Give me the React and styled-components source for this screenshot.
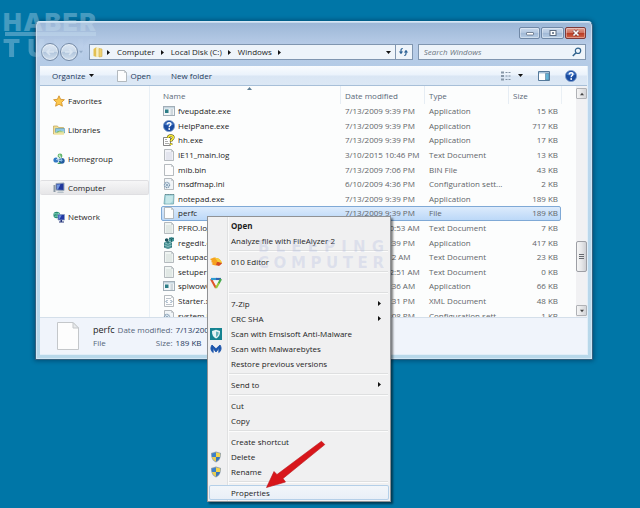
import React from "react";
import styled, { createGlobalStyle, css } from "styled-components";

const Global = createGlobalStyle`
  * { box-sizing: border-box; }
  body {
    margin: 0;
    background: #0076a7;
    font: 8px/12px "Open Sans", "Noto Sans", sans-serif;
    color: #1c1c1c;
  }
  button, input { font: inherit; color: inherit; border: 0; padding: 0; margin: 0; background: none; }
  ul, dl, dd { margin: 0; padding: 0; list-style: none; }
  svg { display: block; flex: none; }
`;

const Desktop = styled.main`
  position: relative;
  min-height: 100vh;
  padding: 21px 47px 0 35px;
  overflow: hidden;
`;

const Window = styled.section`
  display: flex;
  flex-direction: column;
  padding: 0 4px 4px;
  border: 1px solid #35607e;
  border-top-color: #d5e6f5;
  border-radius: 5px 5px 1px 1px;
  background: linear-gradient(#9bb6d6 0, #b9cde8 24px, #b4cbe6 44px, #bdd7ee 70px, #b8d8ea 100%);
  box-shadow: 0 0 4px 1px rgba(0, 30, 60, 0.45), inset 0 0 0 1px rgba(225, 240, 250, 0.6);
`;

const TitleBar = styled.header`
  display: flex;
  justify-content: flex-end;
  gap: 1px;
  padding: 5px 2px 5px 0;
`;

const CaptionButton = styled.button`
  display: grid;
  place-items: center;
  width: ${(p) => (p.$wide ? 23 : 21)}px;
  height: 12px;
  border: 1px solid ${(p) => (p.$danger ? "#7d3a3a" : "#7088a6")};
  border-radius: 2px;
  box-shadow: inset 0 0 0 1px rgba(255, 255, 255, 0.35);
  background: ${(p) =>
    p.$danger
      ? "linear-gradient(#e0a194 0, #cf7361 45%, #b93a22 50%, #d0654b 100%)"
      : "linear-gradient(#c9d9ec 0, #b4c8e0 45%, #9fb7d4 50%, #b8cee6 100%)"};
`;

const AddressRow = styled.div`
  display: flex;
  align-items: center;
  gap: 5px;
  height: 16px;
  margin: 0 2px 6px 0;
`;

const HistoryButtons = styled.div`
  display: flex;
  align-items: center;
  gap: 1px;
  width: 44px;
  padding-left: 1px;
`;

const RoundButton = styled.button`
  flex: none;
  display: grid;
  place-items: center;
  width: 18px;
  height: 18px;
  border: 1px solid #7288a4;
  border-radius: 50%;
  background: linear-gradient(#dde8f4 0, #c9d8e9 48%, #b1c5dc 52%, #d3e1ef 100%);
  box-shadow: inset 0 0 0 1px rgba(255, 255, 255, 0.45);
`;

const field = css`
  display: flex;
  align-items: center;
  height: 16px;
  border: 1px solid #8096b0;
  background: #eef4fa;
`;

const AddressBox = styled.nav`
  ${field}
  flex: 329 1 0;
  padding-left: 2px;
  > svg + button { margin-left: 2px; }
`;

const Crumb = styled.button`
  display: flex;
  align-items: center;
  gap: 5px;
  margin-left: 6px;
  white-space: nowrap;
`;

const DropButton = styled.button`
  display: grid;
  place-items: center;
  width: 13px;
  height: 14px;
  margin-left: auto;
`;

const RefreshButton = styled.button`
  display: grid;
  place-items: center;
  width: 17px;
  height: 14px;
  border-left: 1px solid #8096b0;
`;

const SearchBox = styled.label`
  ${field}
  flex: 163 1 0;
  padding: 0 3px 0 5px;
  input {
    flex: 1;
    min-width: 0;
    outline: 0;
  }
  input::placeholder { color: #6c7480; font-style: italic; opacity: 1; }
`;

const Client = styled.div`
  border: 1px solid #e2eef8;
  border-width: 0 1px 1px 0;
  background: #fcfdfd;
`;

const Toolbar = styled.div`
  display: flex;
  align-items: center;
  height: 20px;
  padding: 0 10px 0 12px;
  color: #1e3a5c;
  border-bottom: 1px solid #a7bfd8;
  background: linear-gradient(#fafcfe 0, #eaf2fb 48%, #dae6f4 52%, #dce8f5 100%);
`;

const ToolButton = styled.button`
  display: flex;
  align-items: center;
  gap: ${(p) => p.$gap ?? 4}px;
  margin-right: ${(p) => p.$after ?? 20}px;
  white-space: nowrap;
`;

const ToolGroup = styled.div`
  display: flex;
  align-items: center;
  gap: 15px;
  margin-left: auto;
`;

const Panes = styled.div`
  display: flex;
  height: 231px;
`;

const Sidebar = styled.nav`
  flex: none;
  display: flex;
  flex-direction: column;
  gap: 14px;
  width: 110px;
  padding-top: 7px;
  border-right: 1px solid #e9f0f6;
`;

const PlaceLink = styled.a`
  display: flex;
  align-items: center;
  gap: 3px;
  height: 15px;
  padding-left: 13px;
  color: #1c1c1c;
  text-decoration: none;
  border: 1px solid ${(p) => (p.$current ? "#dfdfe2" : "transparent")};
  border-left: 0;
  border-radius: 2px;
  background: ${(p) => (p.$current ? "linear-gradient(#f6f6f7, #e6e6e8)" : "none")};
`;

const ListPane = styled.div`
  flex: 1;
  min-width: 0;
  overflow: hidden;
  padding: 0 14px 0 11px;
`;

const FileTable = styled.table`
  display: block;
  position: relative;
  thead { display: block; }
  tbody { display: grid; grid-auto-rows: 1fr; height: 219px; }
`;

const columns = css`
  display: grid;
  grid-template-columns: minmax(0, 1fr) 84px 84px 54px;
  align-items: center;
`;

const HeadRow = styled.tr`
  ${columns}
  height: 18px;
  th {
    height: 18px;
    padding: 4px 0 0 4px;
    font-weight: 400;
    text-align: left;
    color: #5a6878;
    border-left: 1px solid #e6edf4;
  }
  th:first-child { border-left: 0; padding-left: 2px; }
  th:last-child { border-right: 1px solid #eaf0f5; }
`;

const SortMark = styled.svg`
  position: absolute;
  left: 86px;
  top: 1px;
`;

const FileRow = styled.tr`
  ${columns}
  color: #626569;
  border: 1px solid ${(p) => (p.$selected ? "#7fa9d6" : "transparent")};
  border-radius: 2px;
  margin-right: 1px;
  background: ${(p) => (p.$selected ? "linear-gradient(#dcebfc, #bcd8f8)" : "none")};
  td { padding: 0 0 0 7px; line-height: 12px; white-space: nowrap; }
  td:last-child { text-align: right; padding-right: 2px; }
`;

const FileName = styled.td`
  && {
    display: flex;
    align-items: center;
    gap: 3px;
    padding-left: 1px;
    color: #1c1c1c;
  }
`;

const ScrollTrack = styled.div`
  flex: none;
  display: flex;
  flex-direction: column;
  align-items: stretch;
  width: 11px;
  padding: 2px 0 1px;
  background: #f1f1f3;
`;

const ScrollButton = styled.button`
  display: grid;
  place-items: center;
  height: 11px;
  border: 1px solid #b0b2b6;
  border-radius: 1px;
  background: linear-gradient(90deg, #f5f5f5, #d4d5d8);
`;

const ScrollThumb = styled.div`
  display: grid;
  place-items: center;
  height: 31px;
  margin: auto 0 33px;
  border: 1px solid #9d9fa5;
  border-radius: 2px;
  background: linear-gradient(90deg, #f6f6f6, #e6e7e9 50%, #cfd0d4);
`;

const Details = styled.footer`
  display: flex;
  align-items: center;
  gap: 14px;
  height: 37px;
  padding-left: 17px;
  border-top: 1px solid #d4dfea;
  background: #f0f4fb;
`;

const Facts = styled.dl`
  display: grid;
  grid-template-columns: auto auto auto;
  column-gap: 3px;
  row-gap: 1px;
  align-items: center;
  color: #54657a;
  dd { color: #1e395b; }
`;

const FileTitle = styled.dt`
  font-size: 9px;
  color: #1c1c1c;
`;

const FactLabel = styled.dt`
  text-align: right;
`;

const Menu = styled.div`
  position: absolute;
  left: 207px;
  top: 216px;
  width: 184px;
  padding: 1px;
  border: 1px solid #909295;
  background: linear-gradient(90deg, #f0f0f1 19px, #e0e1e2 19px, #e0e1e2 20px, #fafafa 20px, #fafafa 21px, #f0f0f1 21px);
  box-shadow: 2px 2px 2px rgba(0, 0, 0, 0.5);
`;

const MenuItem = styled.button`
  display: grid;
  grid-template-columns: 22px 1fr auto;
  align-items: center;
  width: 100%;
  height: 15px;
  padding: 0 7px 0 0;
  text-align: left;
  font-weight: ${(p) => (p.$strong ? 700 : 400)};
  border-radius: 2px;
  ${(p) =>
    p.$hot &&
    css`
      box-shadow: inset 0 0 0 1px #b4cfe8;
      background: linear-gradient(#f3f6fa, #e8eff7);
    `}
  svg:first-child { margin-left: 1px; }
`;

const Divider = styled.hr`
  height: 2px;
  margin: 2px 1px 2px 20px;
  border: 0;
  border-top: 1px solid #dedfe0;
  background: #fcfcfc;
`;

const Wordmark = styled.div`
  position: absolute;
  pointer-events: none;
`;

const CornerMark = styled(Wordmark)`
  left: 3px;
  top: 13px;
  width: 93px;
  color: rgba(205, 228, 242, 0.34);
  font: 900 25px/18px Inter, "Liberation Sans", sans-serif;
`;

const Bar = styled.div`
  height: 4px;
  margin: 1px 0 3px 2px;
  background: currentColor;
`;

const CenterMark = styled(Wordmark)`
  left: 258px;
  top: 239px;
  width: 126px;
  color: rgba(150, 165, 215, 0.22);
  font: 700 15px/16px "DejaVu Sans", sans-serif;
`;

const Letters = styled.div`
  display: flex;
  justify-content: space-between;
  mask-image: ${(p) => (p.$fade ? "linear-gradient(90deg, #000 30%, rgba(0, 0, 0, 0.25) 55%)" : "none")};
`;

const Pointer = styled.svg`
  position: absolute;
  left: 264px;
  top: 438px;
  pointer-events: none;
`;

const Spread = ({ text, fade }) => (
  <Letters $fade={fade}>
    {[...text].map((c, i) => (
      <span key={i}>{c}</span>
    ))}
  </Letters>
);

const Arrow = ({ down, up, size = 5, color = "#111" }) => (
  <svg width={size} height={size} viewBox="0 0 5 5" aria-hidden="true">
    <path d={down ? "M0 1h5L2.500 4z" : up ? "M0 4h5L2.500 1z" : "M1 0v5l3-2.500z"} fill={color} />
  </svg>
);

const Sheet = ({ children, fill = "#fdfdfd" }) => (
  <>
    <path d="M1.500.5h7l2 2v9h-9z" fill={fill} stroke="#a3a9ae" strokeWidth=".8" />
    <path d="M8.500.5v2h2" fill="none" stroke="#b6bbc0" strokeWidth=".7" />
    {children}
  </>
);

const Question = ({ fill }) => (
  <>
    <path d="M4.300 4.600c0-2.500 3.700-2.400 3.600-.3 0 1.200-1.700 1.300-1.700 2.900" fill="none" stroke={fill} strokeWidth="1.400" />
    <circle cx="6.200" cy="9" r=".9" fill={fill} />
  </>
);

const Gear = () => (
  <>
    <circle cx="4" cy="7" r="2.600" fill="#dbe7f0" stroke="#7d98b0" strokeWidth="1.200" strokeDasharray="1.300 .6" />
    <circle cx="4" cy="7" r="1" fill="#7d98b0" />
  </>
);

const art = {
  app: (
    <>
      <rect x=".5" y="1.500" width="11" height="9" fill="#f2f6f8" stroke="#a2aeb7" />
      <path d="M1 2h10v1.500H1z" fill="#c4d4de" />
      <path d="M2 4.500h3.500v3.500H2z" fill="#2c7d86" />
      <path d="M7.500 5H10M7.500 7H10M7.500 9H10" stroke="#9aa9b2" strokeWidth=".8" />
    </>
  ),
  help: (
    <>
      <circle cx="6" cy="6" r="5.600" fill="#1b4ca0" stroke="#7e9dcb" strokeWidth=".8" />
      <path d="M1.500 4.500a5 5 0 0 1 9 0Q6 6.500 1.500 4.500" fill="#4d80cd" />
      <Question fill="#fff" />
    </>
  ),
  chm: (
    <>
      <path d="M.5 3.500h7v8h-7z" fill="#fff" stroke="#666" strokeWidth=".8" />
      <path d="M2 5.500h2M2 7.500h3M2 9.500h4" stroke="#888" strokeWidth=".7" />
      <path d="M5.200 4C4.900.7 10.800.7 10.200 3.700 9.900 5.100 8 5.400 8 7.600M8 9.300v1.800" fill="none" stroke="#4a4512" strokeWidth="2.700" />
      <path d="M5.200 3.800C4.900.9 10.800.9 10.200 3.700 9.900 5.100 8 5.400 8 7.300M8 9.500v1.400" fill="none" stroke="#f7ea3a" strokeWidth="1.800" />
    </>
  ),
  log: (
    <Sheet fill="#f1f2f8">
      <path d="M3 4h6M3 6h6M3 8h6M3 10h6" stroke="#c5c8d8" strokeWidth=".6" />
    </Sheet>
  ),
  text: (
    <Sheet fill="#eff4f2">
      <path d="M3 4h6M3 6h6M3 8h6M3 10h6" stroke="#bfcdc8" strokeWidth=".6" />
    </Sheet>
  ),
  blank: <Sheet />,
  ini: (
    <Sheet fill="#f1f5f8">
      <Gear />
    </Sheet>
  ),
  notepad: (
    <>
      <path d="M2 1.500h9l-.5 9.500H1z" fill="#a5d5dc" stroke="#6ea3aa" strokeWidth=".8" />
      <path d="M3 3h7l-.4 5L7 10.500H2.500z" fill="#c5e7e9" />
      <path d="M2 1.500h9" stroke="#688b91" strokeDasharray="1 .6" />
    </>
  ),
  registry: (
    <>
      <path d="M1 5.500 5 4l4 1.500v5L5 12l-4-1.500z" fill="#2c757b" />
      <path d="m1 5.500 4 1.600 4-1.600M5 7v5M1 8l4 1.600L9 8M3 4.800v6.400M7 4.800v6.400" fill="none" stroke="#a9dcda" strokeWidth=".6" />
      <path d="m6 1 2.500-1L11 1v3L8.500 5 6 4z" fill="#42979a" />
      <path d="m6 1 2.500 1L11 1M8.500 2v3" fill="none" stroke="#123f46" strokeWidth=".6" />
      <path d="m2 2 1.700-.8 1.700.8v2l-1.700.7L2 4z" fill="#1d545d" />
    </>
  ),
  xml: (
    <Sheet>
      <path d="M3 3.500h5M3 9.500h6" stroke="#9da7b2" strokeWidth=".7" />
      <path d="M4.500 5 3 6.500 4.500 8M7.500 5 9 6.500 7.500 8" fill="none" stroke="#5f7f9d" strokeWidth=".9" />
    </Sheet>
  ),
  star: <path d="m6 .8 1.600 3.500 3.800.4-2.800 2.600.8 3.900L6 9.300l-3.400 1.900.8-3.900L.6 4.700l3.800-.4z" fill="#fcc84e" stroke="#cf8b22" strokeWidth=".8" />,
  library: (
    <>
      <path d="M.5 2h4l1 1.500h5V10H.5z" fill="#f0dd92" stroke="#bfa557" strokeWidth=".7" />
      <path d="M2.500 4.500h9V9h-9z" fill="#8ec9e4" stroke="#5c93ac" strokeWidth=".6" />
      <path d="M3 8.800c2-2.600 5-2.700 8.300-.2V9H3z" fill="#71b45c" />
      <path d="M1 8.500h4l1-1h5v3.500H1z" fill="#f7ecae" opacity=".8" />
    </>
  ),
  homegroup: (
    <>
      <circle cx="7" cy="3" r="2.400" fill="#63b56c" />
      <circle cx="3" cy="7" r="2.600" fill="#3379c4" />
      <circle cx="8.800" cy="7.800" r="2.900" fill="#225c9f" />
      <path d="M3.500 6.500 7 3l2 5-5.500-1.500" fill="none" stroke="#d5ebf6" strokeWidth=".9" />
      <circle cx="6.500" cy="2.500" r=".9" fill="#c1ebbd" />
      <circle cx="8.300" cy="7" r="1" fill="#79b8e8" />
      <path d="M4.500 11c.4-2 3-2 3.500 0z" fill="#47a35c" />
    </>
  ),
  computer: (
    <>
      <path d="M3 1.500 11 1v7.500L3 8z" fill="#20379b" stroke="#97a7b8" />
      <path d="m4 2.500 3.500-.2L5 7.500H4z" fill="#7196e0" />
      <path d="M.5 3h2v7h-2z" fill="#8b98a4" />
      <path d="M5 9.500h5l1 1.500H4z" fill="#b6c1c9" />
    </>
  ),
  network: (
    <>
      <circle cx="3.700" cy="4" r="3.300" fill="#2a8d76" />
      <path d="M1 3c2-1 3 1 5-1M1.500 6c2-2 2 0 4-1" stroke="#8ee0c5" fill="none" />
      <path d="M5 3.500h6.500V9H5z" fill="#2238a4" stroke="#8b9fc1" strokeWidth=".8" />
      <path d="M5.800 4.300h3L6.500 8h-.7z" fill="#6d91e0" />
      <path d="M7.500 9v1.500H6v1h5v-1H9V9" fill="#26367c" />
    </>
  ),
  folder: (
    <>
      <path d="M1.500 3 4.500 1v10l-3-1z" fill="#e3c052" />
      <path d="M4.500 1.500h2.500v9.500H4.500z" fill="#faf0bd" />
      <path d="m7 2.500 3 .5v7.500l-3 .5z" fill="#efd273" stroke="#cfad4f" strokeWidth=".6" />
    </>
  ),
  editor: (
    <>
      <path d="M0 3c3-1 5-2 6-1 3 0 5 2 6 5L9 9C5 10 3 9 1.500 8L3 7 1 6l1-1z" fill="#f6a21f" />
      <path d="M5 2c4 0 6 2 7 5L9 9C8 6 7 4 5 2z" fill="#f3cf3c" />
      <path d="M7 6c2 0 4 .5 5 1.500L9 10 6 9z" fill="#d44a23" />
    </>
  ),
  prism: (
    <>
      <path d="m1 2 5 9" stroke="#e2542c" strokeWidth="2.200" />
      <path d="M1 2h6" stroke="#2e9bd0" strokeWidth="2.200" />
      <path d="M6 2h5" stroke="#3063b3" strokeWidth="2.200" />
      <path d="m11 2-2.500 4.500" stroke="#48ab4d" strokeWidth="2.200" />
      <path d="M8.800 6 6 11" stroke="#9bc93e" strokeWidth="2.200" />
      <path d="M3.200 3.500h5.600L6 8.500z" fill="#f3f6f8" />
    </>
  ),
  emsisoft: (
    <>
      <path d="M0 0h12v12H0z" fill="#168391" />
      <path d="M6 1.800 10 3c0 4-1 6-4 7.500C3 9 2 7 2 3z" fill="#e5f4f5" />
      <path d="M6 3.500 8.700 4.200C8.600 7 7.800 8 6 9z" fill="#63b2ba" />
    </>
  ),
  malwarebytes: (
    <path d="M2 2C.3 4.500.6 7.800 3.200 9.600L3 5.200 6 9l3-3.800-.2 4.400C11.400 7.800 11.700 4.500 10 2L6 5.800z" fill="#1e56ac" stroke="#1e56ac" strokeWidth=".9" strokeLinejoin="round" />
  ),
  shield: (
    <>
      <path d="M6 .5 11 2c0 5-1.500 8-5 9.500C2.500 10 1 7 1 2z" fill="#93a1ae" />
      <path d="M6 1.400V6H2C1.800 5 1.800 4 1.900 2.600z" fill="#3d80c9" />
      <path d="M6 1.400 10.100 2.600C10.200 4 10.200 5 10 6H6z" fill="#f1d44c" />
      <path d="M2 6h4v4.600C4 9.500 2.500 8 2 6z" fill="#e9cd51" />
      <path d="M10 6H6v4.600C8 9.500 9.500 8 10 6z" fill="#3875ba" />
    </>
  ),
};

const Icon = ({ name, size = 12 }) => (
  <svg width={size} height={size} viewBox="0 0 12 12" aria-hidden="true">
    {art[name]}
  </svg>
);

const places = [
  ["star", "Favorites"],
  ["library", "Libraries"],
  ["homegroup", "Homegroup"],
  ["computer", "Computer"],
  ["network", "Network"],
];

const files = [
  ["app", "fveupdate.exe", "7/13/2009 9:39 PM", "Application", "15 KB"],
  ["help", "HelpPane.exe", "7/13/2009 9:39 PM", "Application", "717 KB"],
  ["chm", "hh.exe", "7/13/2009 9:39 PM", "Application", "17 KB"],
  ["log", "IE11_main.log", "3/10/2015 10:46 PM", "Text Document", "13 KB"],
  ["blank", "mib.bin", "7/13/2009 7:06 PM", "BIN File", "43 KB"],
  ["ini", "msdfmap.ini", "6/10/2009 4:36 PM", "Configuration sett...", "2 KB"],
  ["notepad", "notepad.exe", "7/13/2009 9:39 PM", "Application", "189 KB"],
  ["blank", "perfc", "7/13/2009 9:39 PM", "File", "189 KB"],
  ["text", "PFRO.log", "3/10/2015 10:53 AM", "Text Document", "7 KB"],
  ["registry", "regedit.exe", "7/13/2009 9:39 PM", "Application", "417 KB"],
  ["text", "setupact.log", "7/1/2009 9:12 AM", "Text Document", "23 KB"],
  ["text", "setuperr.log", "7/13/2009 12:51 AM", "Text Document", "0 KB"],
  ["app", "splwow64.exe", "7/13/2009 9:36 AM", "Application", "66 KB"],
  ["xml", "Starter.xml", "7/13/2009 9:31 PM", "XML Document", "48 KB"],
  ["ini", "system.ini", "6/10/2009 5:08 PM", "Configuration sett...", "1 KB"],
];

const menu = [
  { label: "Open", strong: true },
  { label: "Analyze file with FileAlyzer 2" },
  null,
  { label: "010 Editor", icon: "editor" },
  null,
  { label: "", icon: "prism" },
  null,
  { label: "7-Zip", sub: true },
  { label: "CRC SHA", sub: true },
  { label: "Scan with Emsisoft Anti-Malware", icon: "emsisoft" },
  { label: "Scan with Malwarebytes", icon: "malwarebytes" },
  { label: "Restore previous versions" },
  null,
  { label: "Send to", sub: true },
  null,
  { label: "Cut" },
  { label: "Copy" },
  null,
  { label: "Create shortcut" },
  { label: "Delete", icon: "shield" },
  { label: "Rename", icon: "shield" },
  null,
  { label: "Properties", hot: true },
];

export default function App() {
  return (
    <Desktop>
      <Global />
      <Window aria-label="Windows">
        <TitleBar>
          <CaptionButton aria-label="Minimize">
            <svg width="10" height="6" viewBox="0 0 10 6">
              <rect x="1.500" y="2.500" width="7" height="2.500" rx=".5" fill="#fff" stroke="#5b6b80" strokeWidth=".8" />
            </svg>
          </CaptionButton>
          <CaptionButton $wide aria-label="Maximize">
            <svg width="10" height="8" viewBox="0 0 10 8">
              <rect x="2" y="1.500" width="6" height="5" fill="#fff" stroke="#5b6b80" />
              <rect x="4" y="3.200" width="2" height="1.600" fill="#5b6b80" />
            </svg>
          </CaptionButton>
          <CaptionButton $danger aria-label="Close">
            <svg width="10" height="8" viewBox="0 0 10 8">
              <path d="m2.500 1.500 5 5m0-5-5 5" stroke="#6b3434" strokeWidth="2.800" />
              <path d="m2.500 1.500 5 5m0-5-5 5" stroke="#fff" strokeWidth="1.700" />
            </svg>
          </CaptionButton>
        </TitleBar>
        <AddressRow>
          <HistoryButtons>
            {["Back", "Forward"].map((n, i) => (
              <RoundButton key={n} aria-label={n}>
                <svg width="10" height="8" viewBox="0 0 10 8">
                  <path d={i ? "M1 4h7M5 1l3 3-3 3" : "M9 4H2M5 1 2 4l3 3"} fill="none" stroke="#d9e5f1" strokeWidth="1.600" />
                </svg>
              </RoundButton>
            ))}
            <Arrow down size={4} color="#8fa8c6" />
          </HistoryButtons>
          <AddressBox aria-label="Address">
            <Icon name="folder" />
            {["", "Computer", "Local Disk (C:)", "Windows"].map((c) => (
              <Crumb key={c} aria-label={c || "Locations"}>
                {c}
                <Arrow />
              </Crumb>
            ))}
            <DropButton aria-label="Previous locations">
              <Arrow down />
            </DropButton>
            <RefreshButton aria-label="Refresh">
              <svg width="11" height="10" viewBox="0 0 11 10">
                <path d="M3 6.500V3.300Q3 1.500 4.800 1.500M8 3.500v3.200Q8 8.500 6.200 8.500" fill="none" stroke="#2b6194" strokeWidth="1.200" />
                <path d="M.8 4.500h4.400L3 7zM5.800 5.500h4.400L8 3z" fill="#2b6194" />
              </svg>
            </RefreshButton>
          </AddressBox>
          <SearchBox>
            <input aria-label="Search Windows" placeholder="Search Windows" />
            <svg width="10" height="10" viewBox="0 0 10 10">
              <circle cx="6" cy="3.800" r="2.700" fill="#edf5fc" stroke="#31638d" strokeWidth="1.200" />
              <path d="M4 5.800.8 9" stroke="#31638d" strokeWidth="1.500" />
            </svg>
          </SearchBox>
        </AddressRow>
        <Client>
          <Toolbar>
            <ToolButton $after={22}>
              Organize <Arrow down />
            </ToolButton>
            <ToolButton $gap={2}>
              <Icon name="blank" /> Open
            </ToolButton>
            <ToolButton>New folder</ToolButton>
            <ToolGroup>
              <ToolButton $after={0} aria-label="Change view">
                <svg width="14" height="10" viewBox="0 0 14 10">
                  <path d="M1 1.500h3M1 5h3M1 8.500h3" stroke="#8797a8" strokeWidth="1.800" />
                  <path d="M5.500 1.500h2M8.500 1.500h2M5.500 5h2M8.500 5h2M5.500 8.500h2M8.500 8.500h2" stroke="#8292a4" />
                </svg>
                <Arrow down />
              </ToolButton>
              <ToolButton $after={0} aria-label="Preview pane">
                <svg width="12" height="10" viewBox="0 0 12 10">
                  <path d="M.5.5h11v9H.5z" fill="#fff" stroke="#55799a" />
                  <path d="M1 1h10v1.500H1z" fill="#a8c3da" />
                  <path d="M7.500 2.500H11V9H7.500z" fill="#60b2d6" stroke="#55799a" strokeWidth=".6" />
                </svg>
              </ToolButton>
              <ToolButton $after={0} aria-label="Help">
                <Icon name="help" />
              </ToolButton>
            </ToolGroup>
          </Toolbar>
          <Panes>
            <Sidebar aria-label="Places">
              {places.map(([icon, label]) => (
                <PlaceLink key={label} href="#" $current={label === "Computer"}>
                  <Icon name={icon} />
                  {label}
                </PlaceLink>
              ))}
            </Sidebar>
            <ListPane>
              <FileTable>
                <thead>
                  <HeadRow>
                    <th>
                      Name
                      <SortMark width="5" height="3" viewBox="0 0 5 3">
                        <path d="M0 3 2.500 0 5 3z" fill="#5e7e95" />
                      </SortMark>
                    </th>
                    <th>Date modified</th>
                    <th>Type</th>
                    <th>Size</th>
                  </HeadRow>
                </thead>
                <tbody>
                  {files.map(([icon, name, date, type, size]) => (
                    <FileRow key={name} $selected={name === "perfc"}>
                      <FileName>
                        <Icon name={icon} />
                        {name}
                      </FileName>
                      <td>{date}</td>
                      <td>{type}</td>
                      <td>{size}</td>
                    </FileRow>
                  ))}
                </tbody>
              </FileTable>
            </ListPane>
            <ScrollTrack>
              <ScrollButton aria-label="Scroll up">
                <Arrow up size={4} color="#444" />
              </ScrollButton>
              <ScrollThumb>
                <svg width="5" height="6" viewBox="0 0 5 6">
                  <path d="M0 .5h5M0 2.500h5M0 4.500h5" stroke="#66696f" />
                </svg>
              </ScrollThumb>
              <ScrollButton aria-label="Scroll down">
                <Arrow down size={4} color="#444" />
              </ScrollButton>
            </ScrollTrack>
          </Panes>
          <Details>
            <svg width="22" height="28" viewBox="0 0 22 28" aria-hidden="true">
              <path d="M.5.500h15.500l5.500 5.500v21.500H.5z" fill="#fdfdfd" stroke="#c4c7ca" />
              <path d="M16 .5V6h5.500z" fill="#e8eaec" stroke="#c4c7ca" />
            </svg>
            <Facts>
              <FileTitle>perfc</FileTitle>
              <FactLabel>Date modified:</FactLabel>
              <dd>7/13/2009 9:39 PM</dd>
              <dt>File</dt>
              <FactLabel>Size:</FactLabel>
              <dd>189 KB</dd>
            </Facts>
          </Details>
        </Client>
      </Window>

      <Menu role="menu">
        {menu.map((m, i) =>
          m ? (
            <MenuItem key={i} role="menuitem" aria-label={m.label || "Extension"} $strong={m.strong} $hot={m.hot}>
              {m.icon ? <Icon name={m.icon} /> : <span />}
              <span>{m.label}</span>
              {m.sub && <Arrow />}
            </MenuItem>
          ) : (
            <Divider key={i} />
          )
        )}
      </Menu>

      <CornerMark>
        <Spread text="HABER" />
        <Bar />
        <Spread text="TURK" fade />
      </CornerMark>
      <CenterMark>
        <Spread text="BLEEPING" />
        <Spread text="COMPUTER" />
      </CenterMark>
      <Pointer width="64" height="54" viewBox="0 0 64 54" aria-hidden="true">
        <path d="M57.500 3.200 60.800 6.600 19 40.500l2.500 3.500L2.500 49.500 10 33.500l3 3z" fill="#d8161b" stroke="#b81217" strokeWidth=".6" strokeLinejoin="round" />
      </Pointer>
    </Desktop>
  );
}
